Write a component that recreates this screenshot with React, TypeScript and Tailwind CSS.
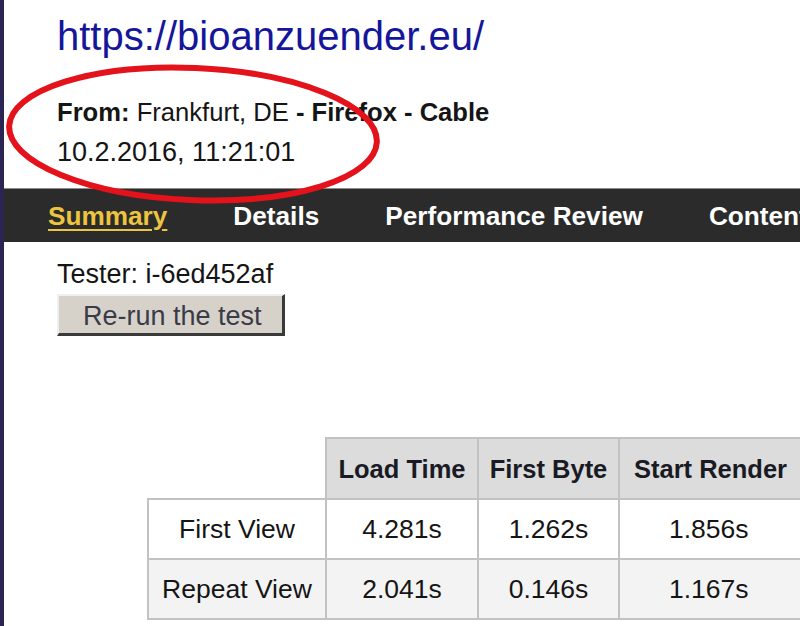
import React from 'react';

const rows = [
    { label: 'First View', load: '4.281s', ttfb: '1.262s', render: '1.856s', speed: '2.417' },
    { label: 'Repeat View', load: '2.041s', ttfb: '0.146s', render: '1.167s', speed: '1.301' },
];

const tabs = ['Summary', 'Details', 'Performance Review', 'Content Breakdown', 'Domains'];

export default function App() {
    return (
        <div className="relative flex w-[800px] h-[626px] overflow-hidden bg-white font-['Liberation_Sans',Arial,sans-serif] text-[#151515]">
            <div className="w-[4px] shrink-0 bg-[#2a2552]" />

            <div className="flex-1 min-w-0">
                {/* test header */}
                <div className="pl-[53px] pt-[16px]">
                    <h1 className="text-[40px] leading-[40px] text-[#16169a] whitespace-nowrap">https://bioanzuender.eu/</h1>
                    <div className="mt-[36px] text-[25.6px] leading-[40px] whitespace-nowrap">
                        <div>
                            <span className="font-bold">From:</span> Frankfurt, DE <span className="font-bold">- Firefox - Cable</span>
                        </div>
                        <div className="text-[27px]">10.2.2016, 11:21:01</div>
                    </div>
                </div>

                {/* tabs */}
                <nav className="mt-[16px] h-[54px] flex items-center pl-[44px] gap-[66px] bg-[#2b2b2b] border-t border-[#8c8c8c] whitespace-nowrap">
                    {tabs.map((t, i) => (
                        <span
                            key={t}
                            className={
                                i === 0
                                    ? 'text-[26.2px] leading-[30px] font-bold text-[#ecc440] underline decoration-2 underline-offset-[4px]'
                                    : 'text-[26.2px] leading-[30px] font-bold text-white'
                            }
                        >
                            {t}
                        </span>
                    ))}
                </nav>

                <div className="pl-[53px] pt-[17px]">
                    <div className="text-[27px] leading-[30px] whitespace-nowrap">Tester: i-6ed452af</div>
                    <button className="mt-[5px] w-[228px] h-[42px] flex items-center pl-[24px] pt-[3px] bg-[#d6d2ca] border-t-2 border-l-2 border-t-[#efefef] border-l-[#efefef] border-r-[3px] border-b-[3px] border-r-[#3a3a3a] border-b-[#3a3a3a] text-[27px] leading-[30px] text-[#3b3a48] whitespace-nowrap">
                        Re-run the test
                    </button>

                    {/* results table */}
                    <table className="table-fixed w-[827px] mt-[101px] ml-[90px] border-collapse text-[26.5px] leading-[30px] whitespace-nowrap">
                        <thead>
                            <tr className="h-[61px]">
                                <th className="w-[178px] p-0" />
                                <th className="w-[152px] border-2 border-[#c2c2c2] bg-[#dcdcdc] font-bold text-[#1a1a24] text-[25.5px]">Load Time</th>
                                <th className="w-[141px] border-2 border-[#c2c2c2] bg-[#dcdcdc] font-bold text-[#1a1a24] text-[25.5px]">First Byte</th>
                                <th className="w-[186px] border-2 border-[#c2c2c2] bg-[#dcdcdc] font-bold text-[#1a1a24] text-[25.5px] text-left pl-[14px]">Start Render</th>
                                <th className="w-[170px] border-2 border-[#c2c2c2] bg-[#dcdcdc] font-bold text-[#1a1a24] text-[25.5px]">Speed Index</th>
                            </tr>
                        </thead>
                        <tbody>
                            {rows.map((r, i) => (
                                <tr key={r.label} className={i === 1 ? 'h-[60px] bg-[#f3f3f3]' : 'h-[60px] bg-white'}>
                                    <td className="border-2 border-[#c2c2c2] text-center">{r.label}</td>
                                    <td className="border-2 border-[#c2c2c2] text-center">{r.load}</td>
                                    <td className="border-2 border-[#c2c2c2] text-center">{r.ttfb}</td>
                                    <td className="border-2 border-[#c2c2c2] text-left pl-[49px]">{r.render}</td>
                                    <td className="border-2 border-[#c2c2c2] text-center">{r.speed}</td>
                                </tr>
                            ))}
                        </tbody>
                    </table>
                </div>
            </div>

            {/* red annotation ellipse */}
            <svg className="absolute left-0 top-0 pointer-events-none" width="800" height="626" viewBox="0 0 800 626">
                <ellipse cx="193" cy="134" rx="184" ry="66" fill="none" stroke="#e3121b" strokeWidth="6" transform="rotate(2.5 193 134)" />
            </svg>
        </div>
    );
}
